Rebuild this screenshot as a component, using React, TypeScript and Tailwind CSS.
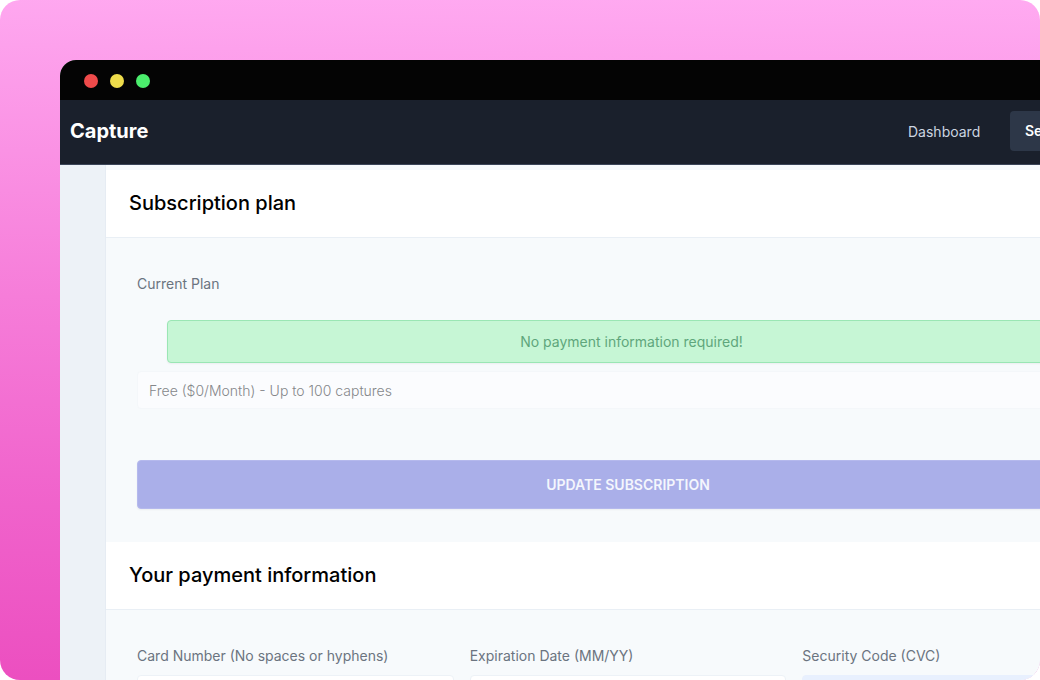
import type { ReactNode } from "react";

function SectionHeader({ children }: { children: ReactNode }) {
  return (
    <header className="border-b border-[#e9eff5] bg-white px-[23px] pt-[19px] pb-5">
      <h2 className="text-[20px] leading-7 font-medium text-black">{children}</h2>
    </header>
  );
}

const labelClass = "block text-[14px] leading-5 text-[#6b7480]";

function CardField({ id, label, filled = false }: { id: string; label: string; filled?: boolean }) {
  return (
    <div>
      <label htmlFor={id} className={labelClass}>
        {label}
      </label>
      <input
        id={id}
        type="text"
        className={
          filled
            ? "mt-[9px] block h-[38px] w-full rounded-sm border border-[#e8f0fe] bg-[#e8f0fe] px-3 text-[14px]"
            : "mt-[9px] block h-[38px] w-full rounded-sm border border-[#edf2f7] bg-white px-3 text-[14px]"
        }
      />
    </div>
  );
}

export default function App() {
  return (
    <div className="h-screen overflow-hidden rounded-[20px] bg-linear-[181deg,#ffaaf1_0%,#fda1ec_9%,#f67dd9_45%,#f062cb_75%,#ec4fc0_100%] pt-[60px] pl-[60px] font-[Inter,sans-serif]">
      <div className="-mr-[155px] min-h-full overflow-hidden rounded-tl-[16px] bg-[#edf2f7]">
        <div className="flex h-10 items-center gap-3 bg-[#040404] px-6 pt-0.5">
          <span className="size-3.5 rounded-full bg-[#ef4b4b]" />
          <span className="size-3.5 rounded-full bg-[#eedc4b]" />
          <span className="size-3.5 rounded-full bg-[#4bee6d]" />
        </div>
        <nav className="flex h-[65px] items-center justify-between border-b border-[#3b4558] bg-[#1a202c] pb-0.5 pl-2.5 text-[14px]">
          <a href="#" className="text-[20px] leading-7 font-bold text-white">
            Capture
          </a>
          <div className="flex w-[287px] items-center justify-between">
            <a href="#" className="text-[#cbd5e0]">
              Dashboard
            </a>
            <a
              href="#"
              className="w-[185px] rounded-sm bg-[#2d3748] px-[15px] py-2.5 leading-5 font-semibold text-white"
            >
              Settings
            </a>
          </div>
        </nav>
        <main className="mr-[45px] ml-[45px] border-l border-[#e6ecf3] bg-[#f7fafc] pt-[5px]">
          <section>
            <SectionHeader>Subscription plan</SectionHeader>
            <div className="px-[31px] pt-9 pb-[33px]">
              <label htmlFor="plan" className={labelClass}>
                Current Plan
              </label>
              <p className="mt-[26px] mr-[23px] ml-[30px] rounded-sm border border-[#9ae6b4] bg-[#c6f6d5] pt-[11px] pb-2.5 text-center text-[14px] leading-5 text-[#5fa67c] shadow-xs">
                No payment information required!
              </p>
              <select
                id="plan"
                disabled
                className="mt-2 block h-[38px] w-full appearance-none rounded-sm border border-[#f4f7fa] bg-[#fbfcfe] px-[11px] text-[14px] font-light text-[#85878a] opacity-100"
              >
                <option>Free ($0/Month) - Up to 100 captures</option>
              </select>
              <button
                type="button"
                disabled
                className="mt-[51px] block h-[49px] w-full rounded-sm border border-[#b5b9ed] bg-[#aaafe9] text-[14px] font-semibold text-[#f4f6fd] shadow-xs"
              >
                UPDATE SUBSCRIPTION
              </button>
            </div>
          </section>
          <section>
            <SectionHeader>Your payment information</SectionHeader>
            <div className="grid grid-cols-3 gap-4 px-[31px] pt-9 pb-8">
              <CardField id="card" label="Card Number (No spaces or hyphens)" />
              <CardField id="expiry" label="Expiration Date (MM/YY)" />
              <CardField id="cvc" label="Security Code (CVC)" filled />
            </div>
          </section>
        </main>
      </div>
    </div>
  );
}
